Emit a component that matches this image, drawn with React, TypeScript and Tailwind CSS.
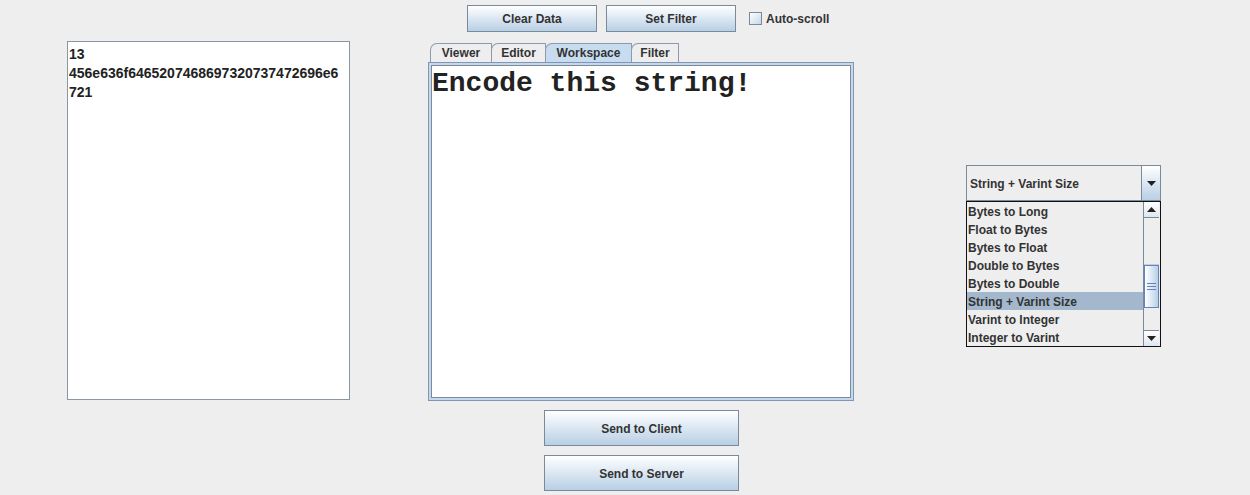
import React from 'react';

const items = [
  'Bytes to Long',
  'Float to Bytes',
  'Bytes to Float',
  'Double to Bytes',
  'Bytes to Double',
  'String + Varint Size',
  'Varint to Integer',
  'Integer to Varint',
];

const tabs = ['Viewer', 'Editor', 'Workspace', 'Filter'];
const tabWidths = ['w-[62px]', 'w-[55px]', 'w-[87px]', 'w-[48px]'];

const MetalButton: React.FC<{ label: string; className: string }> = ({ label, className }) => (
  <button
    className={`${className} flex items-center justify-center pt-[1px] border border-[#7a8a99] bg-gradient-to-b from-[#ffffff] to-[#b8cfe5] text-[12px] font-bold text-[#333333]`}
  >
    {label}
  </button>
);

const ArrowDown: React.FC = () => (
  <svg width="9" height="5" viewBox="0 0 9 5">
    <path d="M0 0H9L4.5 5Z" fill="#222" />
  </svg>
);

const ArrowUp: React.FC = () => (
  <svg width="9" height="5" viewBox="0 0 9 5">
    <path d="M0 5H9L4.5 0Z" fill="#222" />
  </svg>
);

export default function App() {
  return (
    <div className="w-[1250px] h-[495px] bg-[#eeeeee] text-[#333333] font-['Liberation_Sans',Arial,sans-serif] overflow-hidden">
      {/* top toolbar */}
      <div className="flex items-center pt-[5px] pl-[467px]">
        <MetalButton label="Clear Data" className="w-[130px] h-[27px]" />
        <MetalButton label="Set Filter" className="w-[130px] h-[27px] ml-[9px]" />
        <div className="flex items-center ml-[13px] gap-[4px]">
          <div className="w-[13px] h-[13px] border border-[#7a8a99] bg-gradient-to-br from-[#ffffff] to-[#c6d6e8]" />
          <span className="text-[12px] font-bold">Auto-scroll</span>
        </div>
      </div>

      {/* main row */}
      <div className="flex items-start mt-[9px]">
        <div className="ml-[67px] w-[283px] h-[359px] bg-white border border-[#8a96a3] pl-[1px] pt-[3px] text-[14px] font-bold leading-[19px] text-[#222]">
          <div>13</div>
          <div>456e636f6465207468697320737472696e6</div>
          <div>721</div>
        </div>

        <div className="ml-[78px] mt-[2px] w-[426px] flex flex-col">
          <div className="flex items-end h-[19px] pl-[2px]">
            {tabs.map((t, i) => (
              <div
                key={t}
                className={`${tabWidths[i]} h-[19px] flex items-center justify-center rounded-tl-[7px] border border-b-0 border-[#8c9aab] text-[12px] font-bold ${
                  i === 2 ? 'bg-[#c8dcf0]' : 'bg-[#eeeeee]'
                } ${i === 0 ? '' : '-ml-[1px]'}`}
              >
                {t}
              </div>
            ))}
          </div>
          <div className="h-[339px] border border-[#7f97b5] bg-[#c5d8ee] p-[2px]">
            <div className="h-full border border-[#7a8a99] bg-white">
              <div className="h-full bg-white pt-[2px] font-['Liberation_Mono','Courier_New',monospace] text-[28px] font-bold leading-[32px] text-[#222]">
                Encode this string!
              </div>
            </div>
          </div>
        </div>

        <div className="ml-[112px] mt-[124px] w-[195px] flex flex-col">
          <div className="h-[36px] flex border border-[#7a8a99] bg-[#eeeeee]">
            <div className="flex-1 flex items-center pl-[3px] pt-[1px] text-[12px] font-bold">String + Varint Size</div>
            <div className="w-[19px] flex items-center justify-center border-l border-[#7a8a99] bg-gradient-to-b from-[#ffffff] to-[#b8cfe5]">
              <ArrowDown />
            </div>
          </div>
          <div className="h-[146px] flex border border-[#111] bg-[#eeeeee]">
            <div className="flex-1 flex flex-col">
              {items.map((it) => (
                <div
                  key={it}
                  className={`h-[18px] flex items-center pl-[1px] pt-[2px] text-[12px] font-bold ${
                    it === 'String + Varint Size' ? 'bg-[#a3b8cc]' : ''
                  }`}
                >
                  {it}
                </div>
              ))}
            </div>
            <div className="w-[16px] mr-[1px] flex flex-col border-l border-[#7a8a99] bg-[#eeeeee]">
              <div className="h-[16px] flex items-center justify-center border-b border-[#7a8a99] bg-gradient-to-b from-[#ffffff] to-[#dde6ef]">
                <ArrowUp />
              </div>
              <div className="h-[47px] border-b border-[#c4cdd6]" />
              <div className="h-[43px] flex flex-col items-center justify-center gap-[2px] border border-[#6382bf] bg-gradient-to-r from-[#ffffff] via-[#dde8f4] to-[#b8cfe5]">
                <div className="w-[9px] h-px bg-[#6382bf]" />
                <div className="w-[9px] h-px bg-[#6382bf]" />
                <div className="w-[9px] h-px bg-[#6382bf]" />
              </div>
              <div className="flex-1" />
              <div className="h-[16px] flex items-center justify-center border-t border-[#7a8a99] bg-gradient-to-b from-[#ffffff] to-[#dde6ef]">
                <ArrowDown />
              </div>
            </div>
          </div>
        </div>
      </div>

      {/* bottom buttons */}
      <div className="flex flex-col ml-[544px] mt-[9px] gap-[9px]">
        <MetalButton label="Send to Client" className="w-[195px] h-[36px]" />
        <MetalButton label="Send to Server" className="w-[195px] h-[36px]" />
      </div>
    </div>
  );
}
